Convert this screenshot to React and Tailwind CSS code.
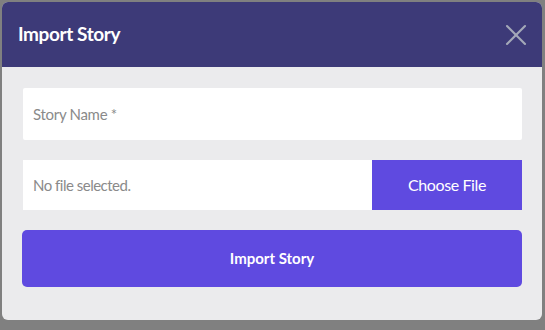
import { X } from 'lucide-react';

export default function App() {
    return (
        <div className="w-[545px] h-[330px] bg-[#808080] pt-[2px] pl-[2px] overflow-hidden" style={{ fontFamily: 'Lato, "Open Sans", sans-serif' }}>
            <div className="w-[540px] h-[318px] bg-[#ebebed] rounded-[6px] overflow-hidden flex flex-col">
                <div className="h-[65px] bg-[#3d3a78] flex items-center justify-between pl-[16px] pr-[8px]">
                    <h1 className="text-white text-[19px] font-bold tracking-[-0.4px]">Import Story</h1>
                    <X className="w-[36px] h-[36px] text-[#a4a9b8]" strokeWidth={1.4} />
                </div>
                <div className="flex flex-col gap-[20px] pt-[21px] pl-[20px] pr-[20px]">
                    <div className="h-[52px] bg-white rounded-[2px] ml-[1px] flex items-center px-[10px]">
                        <span className="text-[15px] text-[#8a8a8a] tracking-[-0.3px]">Story Name *</span>
                    </div>
                    <div className="h-[50px] bg-white ml-[1px] flex">
                        <div className="flex-1 flex items-center px-[10px] rounded-l-[2px]">
                            <span className="text-[15px] text-[#8a8a8a] tracking-[-0.5px]">No file selected.</span>
                        </div>
                        <button className="w-[150px] bg-[#5f4ae0] text-white text-[16px] tracking-[-0.4px] flex items-center justify-center">
                            Choose File
                        </button>
                    </div>
                    <button className="h-[57px] bg-[#5f4ae0] rounded-[5px] text-white text-[15px] font-bold flex items-center justify-center">
                        Import Story
                    </button>
                </div>
            </div>
        </div>
    );
}
